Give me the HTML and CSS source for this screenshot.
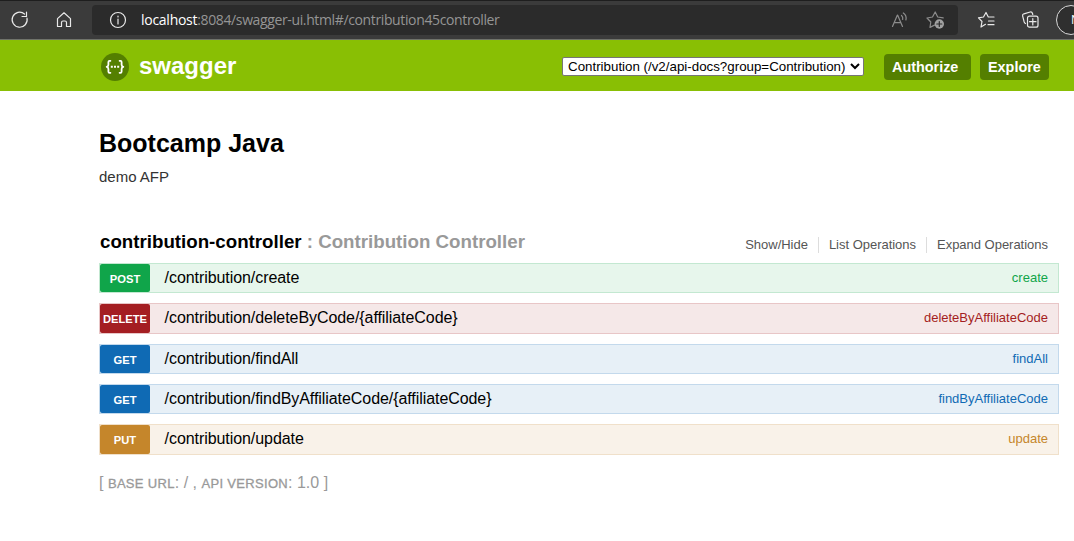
FILE: index.html
```html
<!DOCTYPE html>
<html lang="en">
<head>
<meta charset="utf-8">
<title>Swagger UI</title>
<link rel="stylesheet" href="styles.css">
</head>
<body>
<div class="browser">
  <svg class="nav-icon reload" width="20" height="20" viewBox="0 0 20 20"><path d="M17 8.2A7.5 7.5 0 1 1 14.5 4M16.5 2v4.5H12"/></svg>
  <svg class="nav-icon home" width="20" height="20" viewBox="0 0 20 20"><path d="M3.5 8.6 10 2.8l6.5 5.8v7.9h-4v-4a1.5 1.5 0 0 0-1.5-1.5H9a1.5 1.5 0 0 0-1.5 1.5v4h-4z"/></svg>
  <div class="address">
    <svg class="info" width="18" height="18" viewBox="0 0 18 18"><circle cx="9" cy="9" r="7.5"/><path d="M9 8v5M9 5v1"/></svg>
    <span class="url"><b>localhost</b>:8084/swagger-ui.html#/contribution45controller</span>
    <svg class="dim read" width="18" height="18" viewBox="0 0 18 18"><path d="M1.5 15.5 6.3 4.2h.4l4.8 11.3M3.2 11.6h6.6M10.5 4.5q1.7 1.5 1.2 4M12.3 2q3.7 2.6 2.6 7"/></svg>
    <svg class="dim fav" width="20" height="20" viewBox="0 0 20 20"><path d="M8.5 15.1 4 17.4l.8-5.4L1 8l5.5-1L9.2 2l2.5 5 5.5.9"/><circle class="disc" cx="13.3" cy="14" r="4.7"/><path class="plus" d="M13.3 11.5v5M10.8 14h5"/></svg>
  </div>
  <svg class="nav-icon favorites" width="20" height="20" viewBox="0 0 20 20"><path d="M8.5 14.3 4 17l1-5.5L1.5 7.8l5-.8L9 2.5 11.3 7H17M11.5 11H17M11 14.7h6"/></svg>
  <svg class="nav-icon collections" width="20" height="20" viewBox="0 0 20 20"><path d="M4.5 13.5Q3.5 13 3.1 11.7L1.6 5.8Q1.3 4.3 2.9 3.8L9.2 2q1.7-.4 2.2 1.2l.4 1.3"/><rect x="6.5" y="6.2" width="10.5" height="11" rx="2"/><path d="M11.8 8.5v6.5M8.5 11.7H15"/></svg>
  <div class="profile">N</div>
</div>
<header class="header">
  <a class="logo">
    <svg width="28" height="28" viewBox="0 0 28 28"><circle cx="14" cy="14" r="14"/><path d="M9.4 7.8H8.5Q7.4 7.8 7.4 9v2.7q0 1.7-1.7 2.1 1.7.4 1.7 2.1v2.6q0 1.3 1.1 1.3h.9M18.6 7.8h.9q1.1 0 1.1 1.2v2.7q0 1.7 1.7 2.1-1.7.4-1.7 2.1v2.6q0 1.3-1.1 1.3h-.9"/><path class="dots" d="M9.8 13.8h2M13 13.8h2M16.2 13.8h2"/></svg>
    <span class="brand">swagger</span>
  </a>
  <select class="spec"><option>Contribution (/v2/api-docs?group=Contribution)</option></select>
  <a class="button authorize">Authorize</a>
  <a class="button explore">Explore</a>
</header>
<main class="content">
  <h1 class="title"><span>Bootcamp Java</span></h1>
  <p class="description">demo AFP</p>
  <div class="heading">
    <h2 class="resource"><span class="resource-name">contribution-controller</span><span class="resource-desc"> : Contribution Controller</span></h2>
    <ul class="options"><li>Show/Hide</li><li>List Operations</li><li>Expand Operations</li></ul>
  </div>
  <div class="operations">
    <div class="operation post"><span class="method">POST</span><span class="path">/contribution/create</span><span class="nickname">create</span></div>
    <div class="operation delete tall"><span class="method">DELETE</span><span class="path">/contribution/deleteByCode/{affiliateCode}</span><span class="nickname">deleteByAffiliateCode</span></div>
    <div class="operation get"><span class="method">GET</span><span class="path">/contribution/findAll</span><span class="nickname">findAll</span></div>
    <div class="operation get"><span class="method">GET</span><span class="path">/contribution/findByAffiliateCode/{affiliateCode}</span><span class="nickname">findByAffiliateCode</span></div>
    <div class="operation put tall"><span class="method">PUT</span><span class="path">/contribution/update</span><span class="nickname">update</span></div>
  </div>
  <footer class="footer">[ <span class="caps">BASE URL</span>: / , <span class="caps">API VERSION</span>: 1.0 ]</footer>
</main>
</body>
</html>
```
FILE: styles.css
```css
* { box-sizing: border-box; }
body { margin: 0; width: 1074px; height: 541px; overflow: hidden; background: #fff; font-family: "Liberation Sans", Arial, sans-serif; color: #000; }
svg { flex: none; display: block; fill: none; stroke: #e9e9e9; stroke-width: 1.2; stroke-linecap: round; stroke-linejoin: round; }

.browser { display: flex; align-items: center; height: 40px; background: #3b3b3b; border-top: 1px solid #1e1e1e; border-bottom: 1px solid #70736b; overflow: hidden; }
.reload { margin-left: 10px; }
.home { margin-left: 24px; }
.address { display: flex; align-items: center; flex: none; width: 866px; height: 30px; margin-left: 18px; border-radius: 4px; background: #2b2b2b; }
.info { margin-left: 17px; }
.url { margin-left: 14px; width: 745px; font: 14px/30px "Open Sans", "Noto Sans", sans-serif; letter-spacing: -0.37px; color: #959595; white-space: nowrap; }
.url b { font-weight: 400; color: #fff; letter-spacing: -0.27px; }
.dim { stroke: #8c8c8c; }
.read { margin-left: 5px; }
.fav { margin-left: 17px; }
.disc { fill: #a0a0a0; stroke: none; }
.plus { stroke: #2b2b2b; }
.favorites { margin-left: 19px; }
.collections { margin-left: 24px; }
.profile { flex: none; width: 30px; height: 30px; margin-left: 15px; border: 1px solid #d8d8d8; border-radius: 50%; background: #2f2f2f; color: #fff; font: 12px/28px "Open Sans", sans-serif; padding-left: 14px; }

.header { display: flex; align-items: center; height: 51px; padding: 2px 25px 0 101px; background: #89bf04; }
.logo { display: flex; align-items: center; width: 461px; }
.logo svg { stroke: #fff; stroke-width: 1.8; }
.logo circle { fill: #547f00; stroke: none; }
.logo .dots { stroke-linecap: butt; stroke-width: 2; }
.brand { margin: -2px 0 0 10px; font-size: 24px; font-weight: 700; line-height: 28px; color: #fff; }
.spec { width: 302px; height: 19px; margin: 0; padding: 0 0 0 1px; border: 1px solid #767676; border-radius: 2px; background-color: #fff; color: #000; font: 13.333px "Liberation Sans", Arial, sans-serif; }
.button { height: 26px; border-radius: 4px; background: #547f00; color: #fff; font-size: 14.4px; font-weight: 700; line-height: 26px; padding-left: 8px; }
.authorize { width: 87px; margin-left: 20px; }
.explore { width: 69px; margin-left: 9px; }

.content { padding: 37px 15px 0 99px; }
.title { margin: 0; font-size: 25px; line-height: 30px; font-weight: 700; }
.description { margin: 9px 0 0; font-size: 15px; line-height: 20px; color: #333; }
.heading { display: flex; justify-content: space-between; margin-top: 43px; height: 33px; padding-left: 1px; }
.resource { margin: 0; font-size: 18.72px; line-height: 24px; font-weight: 700; white-space: pre; }
.resource-desc { color: #999; }
.options { display: flex; list-style: none; margin: 7px 11px 0 0; padding: 0; font-size: 13px; line-height: 16px; height: 16px; color: #555; letter-spacing: -0.02px; }
.options li + li { margin-left: 10px; padding-left: 10px; border-left: 1px solid #ddd; }
.operations { display: grid; gap: 10px; }
.operation { display: flex; height: 30px; padding-right: 10px; border: 1px solid; }
.tall { height: 31px; }
.method { width: 50px; border-radius: 2px; color: #fff; font-size: 11.2px; font-weight: 700; line-height: 31px; text-align: center; }
.path { flex: 1; margin-left: 14.6px; font-size: 16px; line-height: 27px; letter-spacing: -0.07px; }
.nickname { font-size: 13px; line-height: 28px; }
.post { background: #e7f6ec; border-color: #c3e8d1; color: #10a54a; }
.post .method { background: #10a54a; }
.delete { background: #f5e8e8; border-color: #e8c6c7; color: #a41e22; }
.delete .method { background: #a41e22; }
.get { background: #e7f0f7; border-color: #c3d9ec; color: #0f6ab4; }
.get .method { background: #0f6ab4; }
.put { background: #f9f2e9; border-color: #f0e0ca; color: #c5862b; }
.put .method { background: #c5862b; }
.operation .path { color: #000; }
.footer { margin-top: 17px; font-size: 16px; line-height: 22px; color: #999; }
.caps { font-size: 13px; letter-spacing: 0.32px; -webkit-text-stroke: 0.3px #999; }
```
